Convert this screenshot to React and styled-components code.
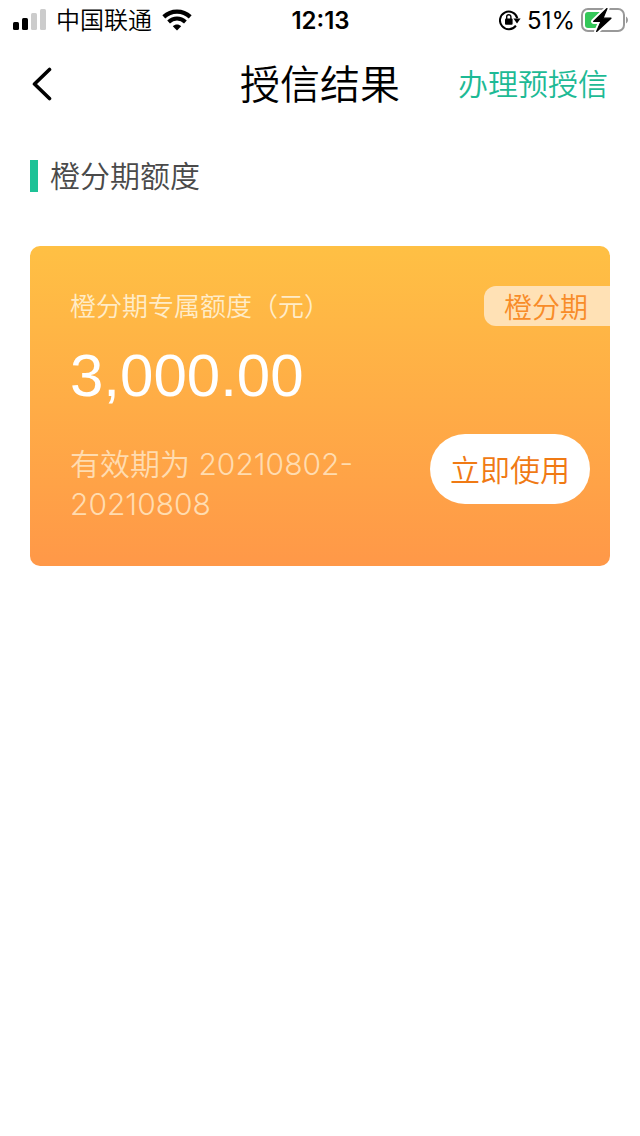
import React from "react";
import styled, { createGlobalStyle } from "styled-components";

const GlobalStyle = createGlobalStyle`
  *, *::before, *::after { box-sizing: border-box; }
  body {
    margin: 0;
    background: #fff;
    color: #000;
    font-family: "Noto Sans CJK SC", sans-serif;
    font-weight: 350;
  }
  h1, h2, p { margin: 0; font-weight: inherit; }
  svg { display: block; flex: none; }
`;

const Page = styled.div`
  min-height: 100vh;
  background: #fff;
`;

const StatusBar = styled.div`
  display: grid;
  grid-template-columns: 1fr auto 1fr;
  align-items: center;
  height: 40px;
  padding: 0 12px 0 13px;
`;

const StatusGroup = styled.div`
  display: flex;
  align-items: center;
  justify-content: ${(p) => (p.$end ? "flex-end" : "flex-start")};
  gap: ${(p) => (p.$end ? "6px" : "10px")};
`;

const StatusText = styled.span`
  padding-top: 2px;
  font-family: Inter, "Noto Sans CJK SC", sans-serif;
  font-size: 24px;
  line-height: 38px;
  font-weight: ${(p) => p.$weight || 400};
`;

const NavBar = styled.header`
  display: grid;
  grid-template-columns: 1fr auto 1fr;
  align-items: center;
  height: 88px;
  padding: 0 32px;
`;

const BackButton = styled.button`
  justify-self: start;
  padding: 0;
  border: 0;
  background: none;
  color: #000;
  cursor: pointer;
`;

const Title = styled.h1`
  padding-bottom: 4px;
  font-size: 40px;
  line-height: 60px;
`;

const NavLink = styled.a`
  justify-self: end;
  padding-bottom: 4px;
  color: #1dba95;
  font-size: 30px;
  line-height: 40px;
  text-decoration: none;
`;

const Main = styled.main`
  padding: 28px 30px;
`;

const SectionHead = styled.div`
  display: flex;
  align-items: center;
  gap: 12px;
  height: 40px;
  margin-bottom: 50px;
`;

const Marker = styled.span`
  width: 8px;
  height: 32px;
  background: #1dc297;
`;

const SectionTitle = styled.h2`
  padding-bottom: 4px;
  color: #4a4a4a;
  font-size: 30px;
  line-height: 40px;
`;

const Card = styled.section`
  padding: 40px 0 40px 40px;
  border-radius: 10px;
  background: linear-gradient(#ffc044, #ff9848);
  color: #fff;
`;

const CardRow = styled.div`
  display: flex;
  align-items: flex-start;
  justify-content: space-between;
`;

const CardLabel = styled.p`
  color: #ffecc8;
  font-size: 26px;
  line-height: 38px;
`;

const Tag = styled.span`
  padding: 0 22px 0 20px;
  border-radius: 12px 0 0 12px;
  background: #ffe1b5;
  color: #f88c28;
  font-size: 28px;
  line-height: 40px;
`;

const Amount = styled.p`
  margin: 12px 0 20px;
  font-family: "Liberation Sans", Arial, sans-serif;
  font-weight: 400;
  font-size: 60px;
  line-height: 76px;
`;

const FootRow = styled(CardRow)`
  padding-right: 20px;
`;

const Validity = styled.p`
  flex: 1;
  padding-top: 10px;
  margin-bottom: 2px;
  color: #ffdcb0;
  font-family: Inter, "Noto Sans CJK SC", sans-serif;
  font-size: 30px;
  line-height: 40px;
`;

const UseButton = styled.button`
  flex: none;
  width: 160px;
  height: 70px;
  padding: 0 0 2px;
  border: 0;
  border-radius: 35px;
  background: #fff;
  color: #f07a14;
  font: inherit;
  font-size: 30px;
  cursor: pointer;
`;

const SignalIcon = () => (
  <svg width="33" height="22" viewBox="0 0 33 22" aria-hidden="true">
    <rect x="0" y="13" width="6" height="8" rx="1.5" />
    <rect x="9" y="9" width="6" height="12" rx="1.5" />
    <rect x="18" y="4" width="6" height="17" rx="1.5" fill="#ccc" />
    <rect x="27" y="0" width="6" height="21" rx="1.5" fill="#ccc" />
  </svg>
);

const WifiIcon = () => (
  <svg width="30" height="22" viewBox="0 0 30 22" aria-hidden="true">
    <path d="M1.8 7.9C9.2 .9 20.8 .9 28.2 7.9" fill="none" stroke="#000" strokeWidth="4.2" />
    <path d="M6.6 13C11.5 8.4 18.5 8.4 23.4 13" fill="none" stroke="#000" strokeWidth="4" />
    <path d="M15 21.4L10.8 17.2C13.2 15 16.8 15 19.2 17.2Z" />
  </svg>
);

const LockIcon = () => (
  <svg width="22" height="22" viewBox="0 0 22 22" aria-hidden="true">
    <path d="M16.9 16.6A8.8 8.8 0 1 1 18.3 9.2" fill="none" stroke="#000" strokeWidth="2" />
    <path d="M14.4 9.6H21.6L18 14.6Z" />
    <rect x="6" y="9.4" width="7.6" height="6.4" rx="1" />
    <path d="M7.7 10V7.8a2.1 2.1 0 0 1 4.2 0V10" fill="none" stroke="#000" strokeWidth="1.4" />
  </svg>
);

const BatteryIcon = () => (
  <svg width="47" height="26" viewBox="0 0 47 26" aria-hidden="true">
    <rect x="1" y="2" width="42" height="22" rx="6" fill="#fff" stroke="#999" strokeWidth="2" />
    <path d="M45 9.5C47.6 11 47.6 15 45 16.5Z" fill="#999" />
    <path d="M7 5H23V21H7a3 3 0 0 1-3-3V8a3 3 0 0 1 3-3Z" fill="#34c759" />
    <path d="M26 1.5L12.6 14.4H20L15.6 24.5L30 11.2H22Z" stroke="#fff" strokeWidth="5" strokeLinejoin="round" />
    <path d="M26 1.5L12.6 14.4H20L15.6 24.5L30 11.2H22Z" stroke="#000" strokeWidth="1.2" strokeLinejoin="round" />
  </svg>
);

const BackIcon = () => (
  <svg width="20" height="36" viewBox="2 0 20 36" aria-hidden="true">
    <path d="M19.5 3.5L4.5 18L19.5 32.5" fill="none" stroke="currentColor" strokeWidth="3.6" strokeLinecap="round" strokeLinejoin="round" />
  </svg>
);

export default function App() {
  return (
    <Page>
      <GlobalStyle />
      <StatusBar>
        <StatusGroup>
          <SignalIcon />
          <StatusText $weight={350}>中国联通</StatusText>
          <WifiIcon />
        </StatusGroup>
        <StatusText $weight={600}>12:13</StatusText>
        <StatusGroup $end>
          <LockIcon />
          <StatusText>51%</StatusText>
          <BatteryIcon />
        </StatusGroup>
      </StatusBar>
      <NavBar>
        <BackButton type="button" aria-label="返回">
          <BackIcon />
        </BackButton>
        <Title>授信结果</Title>
        <NavLink href="#">办理预授信</NavLink>
      </NavBar>
      <Main>
        <SectionHead>
          <Marker />
          <SectionTitle>橙分期额度</SectionTitle>
        </SectionHead>
        <Card>
          <CardRow>
            <CardLabel>橙分期专属额度（元）</CardLabel>
            <Tag>橙分期</Tag>
          </CardRow>
          <Amount>3,000.00</Amount>
          <FootRow>
            <Validity>有效期为 20210802-20210808</Validity>
            <UseButton type="button">立即使用</UseButton>
          </FootRow>
        </Card>
      </Main>
    </Page>
  );
}
